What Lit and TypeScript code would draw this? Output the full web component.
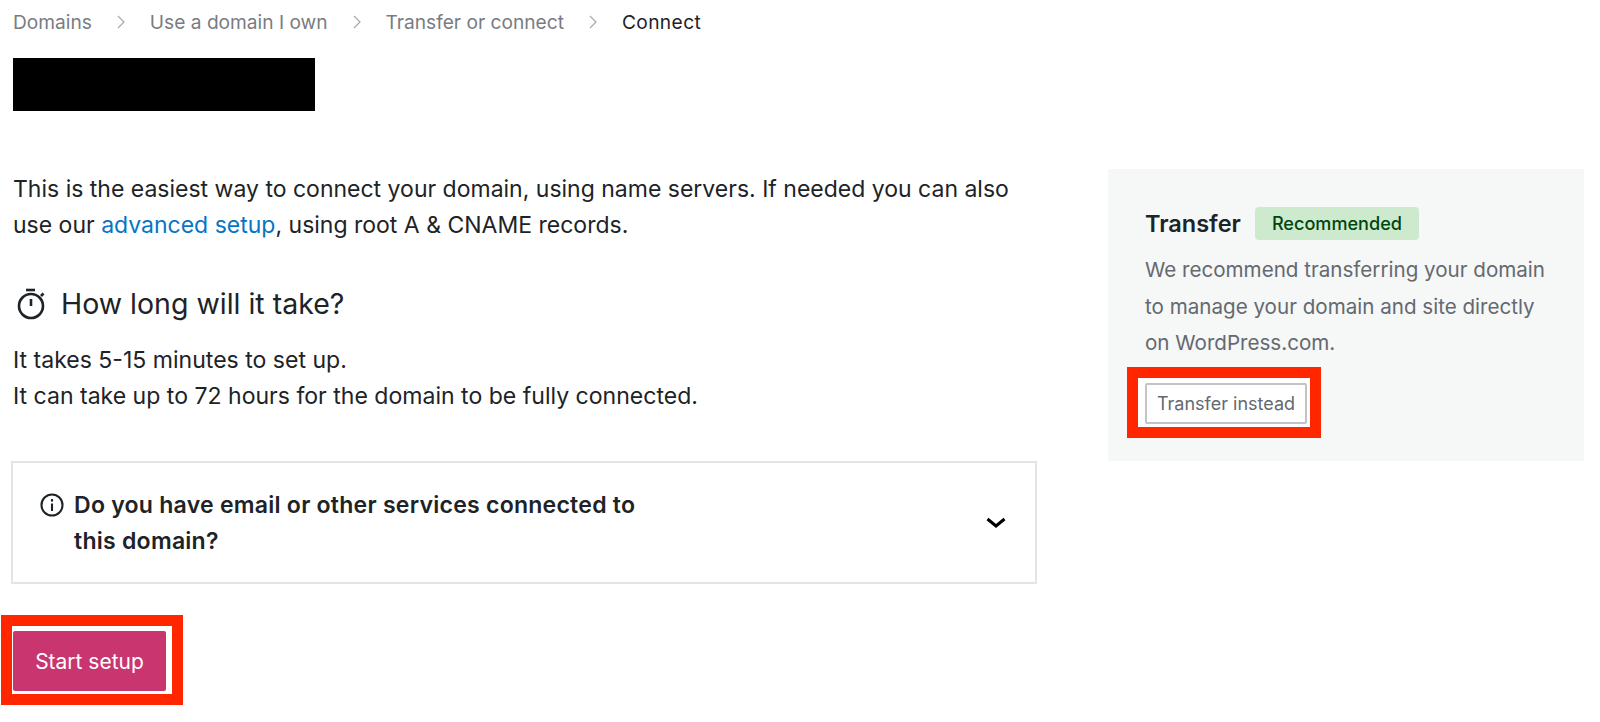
import { LitElement, html, css } from 'lit';
import { customElement } from 'lit/decorators.js';

const crumbChevron = html`
  <svg class="crumb-chevron" viewBox="0 0 8 14" width="8" height="14" fill="none" stroke="#a7aaad" stroke-width="1.2">
    <path d="M1 1l6 6-6 6" />
  </svg>
`;

@customElement('app-root')
export class AppRoot extends LitElement {
  static styles = css`
    :host {
      display: block;
      width: 1600px;
      height: 722px;
      overflow: hidden;
      background: #fff;
      color: #1d2327;
      font-family: Inter, 'Liberation Sans', sans-serif;
    }

    .page {
      padding: 0 15px 0 13px;
    }

    .breadcrumb {
      display: flex;
      align-items: center;
      gap: 25px;
      height: 44px;
      font-size: 19.15px;
      color: #787c82;
    }

    .breadcrumb .current {
      color: #1d2327;
      letter-spacing: 0.4px;
    }

    .crumb-chevron {
      flex: none;
    }

    .redacted {
      width: 302px;
      height: 53px;
      margin-top: 14px;
      background: #000;
    }

    .columns {
      display: grid;
      grid-template-columns: 1024px 476px;
      gap: 71px;
      margin-top: 58px;
      align-items: start;
    }

    .intro {
      margin: 2px 0 0;
      font-size: 23px;
      line-height: 36px;
    }

    .intro a {
      color: #0675c4;
      text-decoration: none;
    }

    .heading {
      display: flex;
      align-items: center;
      gap: 16px;
      margin: 41px 0 0 4px;
      font-size: 28.5px;
      font-weight: 400;
      line-height: 40px;
    }

    .timing {
      margin: 18px 0 0;
      font-size: 23.05px;
      line-height: 36px;
    }

    .notice {
      display: flex;
      justify-content: space-between;
      align-items: center;
      box-sizing: border-box;
      width: 1026px;
      height: 123px;
      margin: 47px 0 0 -2px;
      padding: 0 29px 0 27px;
      border: 2px solid #e2e4e7;
    }

    .notice-text {
      display: flex;
      align-items: flex-start;
      gap: 10px;
      width: 616px;
      font-size: 23.05px;
      font-weight: 600;
      line-height: 36px;
      letter-spacing: 0.24px;
    }

    .notice-text svg {
      flex: none;
      margin-top: 6px;
    }

    .mark {
      display: inline-block;
      border: 11px solid #ff2600;
      background: #fff;
    }

    .mark.primary {
      margin: 31px 0 0 -12px;
      padding: 5px 6px 3px 1px;
    }

    .mark.secondary {
      margin: 5px 0 0 -18px;
      padding: 5px 3px 3px 7px;
    }

    button {
      display: block;
      box-sizing: border-box;
      font-family: inherit;
      border-radius: 2px;
    }

    .start {
      width: 153px;
      height: 60px;
      border: none;
      background: #c9356e;
      color: #fff;
      font-size: 21px;
    }

    .transfer {
      width: 162px;
      height: 41px;
      border: 2px solid #c3c4c7;
      background: #fff;
      color: #646970;
      font-size: 18px;
      padding: 0;
    }

    aside {
      box-sizing: border-box;
      height: 292px;
      padding: 38px 37px 0;
      background: #f6f7f7;
    }

    .aside-title {
      display: flex;
      align-items: center;
      gap: 14px;
      font-size: 23.5px;
      font-weight: 600;
    }

    .badge {
      padding: 0 17px;
      height: 33px;
      line-height: 33px;
      border-radius: 4px;
      background: #cdeacf;
      color: #00450c;
      font-size: 18.1px;
      font-weight: 500;
    }

    .aside-text {
      margin: 12px 0 0;
      color: #646970;
      font-size: 20.6px;
      line-height: 36.5px;
    }
  `;

  render() {
    return html`
      <div class="page">
        <nav class="breadcrumb">
          <span>Domains</span>
          ${crumbChevron}
          <span>Use a domain I own</span>
          ${crumbChevron}
          <span>Transfer or connect</span>
          ${crumbChevron}
          <span class="current">Connect</span>
        </nav>
        <div class="redacted"></div>
        <div class="columns">
          <main>
            <p class="intro">
              This is the easiest way to connect your domain, using name servers. If needed you can also<br />
              use our <a href="#">advanced setup</a>, using root A &amp; CNAME records.
            </p>
            <h2 class="heading">
              <svg width="28" height="32" viewBox="0 0 28 32" fill="none" stroke="#1d2327" stroke-width="2.6">
                <path d="M9 2h9" />
                <circle cx="14" cy="18" r="12" />
                <path d="M14 11v7" />
                <path d="M24 8l2.5-2.5" />
              </svg>
              How long will it take?
            </h2>
            <p class="timing">
              It takes 5-15 minutes to set up.<br />
              It can take up to 72 hours for the domain to be fully connected.
            </p>
            <div class="notice">
              <div class="notice-text">
                <svg width="24" height="24" viewBox="0 0 24 24" fill="none" stroke="#1d2327" stroke-width="2.1">
                  <circle cx="12" cy="12" r="10.5" />
                  <path d="M12 10.5v7.5" />
                  <path d="M12 6v2.6" />
                </svg>
                <span>Do you have email or other services connected to this domain?</span>
              </div>
              <svg width="20" height="12" viewBox="0 0 20 12" fill="none" stroke="#000" stroke-width="3">
                <path d="M1.5 2l8.5 7 8.5-7" />
              </svg>
            </div>
            <div class="mark primary">
              <button class="start">Start setup</button>
            </div>
          </main>
          <aside>
            <div class="aside-title">
              <span>Transfer</span>
              <span class="badge">Recommended</span>
            </div>
            <p class="aside-text">
              We recommend transferring your domain to manage your domain and site directly on WordPress.com.
            </p>
            <div class="mark secondary">
              <button class="transfer">Transfer instead</button>
            </div>
          </aside>
        </div>
      </div>
    `;
  }
}
